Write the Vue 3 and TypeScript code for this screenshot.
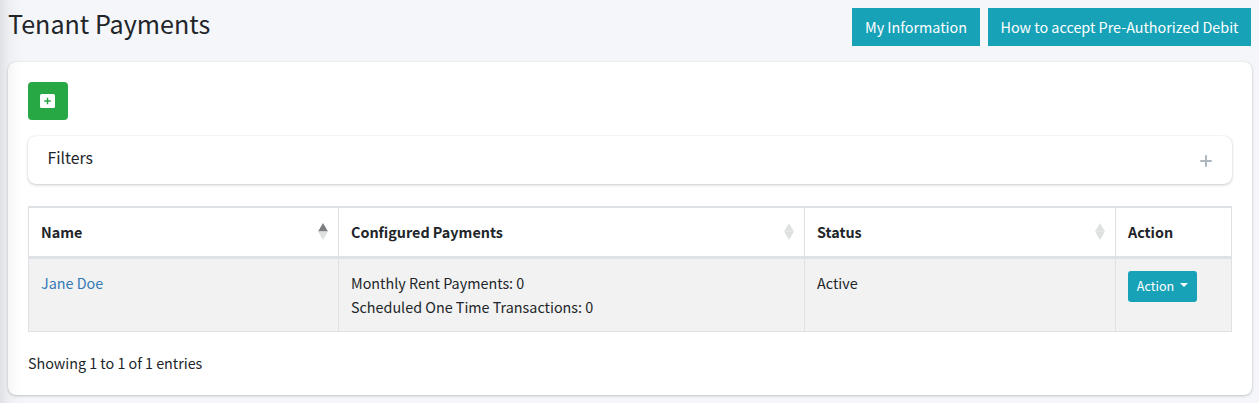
<script setup lang="ts">
interface Column {
  label: string
  sort?: 'asc' | 'none'
}

interface Tenant {
  name: string
  monthly: number
  oneTime: number
  status: string
}

const columns: Column[] = [
  { label: 'Name', sort: 'asc' },
  { label: 'Configured Payments', sort: 'none' },
  { label: 'Status', sort: 'none' },
  { label: 'Action' },
]

const tenants: Tenant[] = [{ name: 'Jane Doe', monthly: 0, oneTime: 0, status: 'Active' }]
</script>

<template>
  <div class="page">
    <header class="top">
      <h1>Tenant Payments</h1>
      <div class="links">
        <button class="info">My Information</button>
        <button class="info">How to accept Pre-Authorized Debit</button>
      </div>
    </header>

    <main class="card">
      <button class="add" aria-label="Add">
        <svg width="15" height="14" viewBox="0 0 15 14">
          <rect width="15" height="14" rx="1.6" fill="#fff" />
          <path d="M7.5 3.8v6.4M4.2 7h6.6" stroke="#28a745" stroke-width="1.5" />
        </svg>
      </button>

      <section class="filters">
        <span>Filters</span>
        <svg class="plus" width="12" height="12" viewBox="0 0 12 12">
          <path d="M6 .3v11.4M.3 6h11.4" stroke="#adb5bd" stroke-width="2" />
        </svg>
      </section>

      <table>
        <colgroup>
          <col class="c1" /><col class="c2" /><col class="c3" /><col class="c4" />
        </colgroup>
        <thead>
          <tr>
            <th v-for="c in columns" :key="c.label">
              <div class="head">
                <span>{{ c.label }}</span>
                <svg v-if="c.sort" class="sort" width="10" height="17" viewBox="0 0 10 17">
                  <path d="M5 0l5 8.6H0z" :fill="c.sort === 'asc' ? '#7b7d7e' : '#dfe1e1'" />
                  <path d="M0 8.6h10L5 17z" fill="#dfe1e1" />
                </svg>
              </div>
            </th>
          </tr>
        </thead>
        <tbody>
          <tr v-for="t in tenants" :key="t.name">
            <td><a>{{ t.name }}</a></td>
            <td>
              <div>Monthly Rent Payments: {{ t.monthly }}</div>
              <div>Scheduled One Time Transactions: {{ t.oneTime }}</div>
            </td>
            <td>{{ t.status }}</td>
            <td>
              <button class="action"><span>Action</span><i class="caret"></i></button>
            </td>
          </tr>
        </tbody>
      </table>

      <p class="summary">Showing 1 to 1 of 1 entries</p>
    </main>
  </div>
</template>

<style>
html,
body {
  background: #f4f6f9;
  overflow: hidden;
}
</style>

<style scoped>
.page {
  position: relative;
  box-sizing: border-box;
  height: 403px;
  padding: 8px 8px 0;
  background: #f4f6f9;
  color: #212529;
  font-family: 'Noto Sans CJK SC', 'Open Sans', sans-serif;
  font-size: 14.35px;
  line-height: 24px;
}

.page::before {
  content: '';
  position: absolute;
  z-index: 1;
  inset: 0 auto 0 0;
  width: 26px;
  background: linear-gradient(to right, rgba(0, 0, 0, 0.085), rgba(0, 0, 0, 0.03) 32%, rgba(0, 0, 0, 0.008) 70%, transparent);
  pointer-events: none;
}

.top {
  display: flex;
  justify-content: space-between;
  height: 54px;
}

h1 {
  margin: 0;
  font-size: 25.1px;
  font-weight: 400;
  line-height: 31px;
}

.links {
  display: flex;
  gap: 8px;
}

button {
  display: flex;
  align-items: center;
  justify-content: center;
  padding: 0;
  border: 0;
  color: #fff;
  font: inherit;
  white-space: nowrap;
}

.info {
  width: 128px;
  height: 38px;
  background: #17a2b8;
}

.info:last-child {
  width: 263px;
}

.card {
  box-sizing: border-box;
  width: 1244px;
  height: 333px;
  padding: 20px;
  border-radius: 8px;
  background: #fff;
  box-shadow: 0 0 1px rgba(0, 0, 0, 0.13), 0 1px 3px rgba(0, 0, 0, 0.2);
}

.add {
  width: 40px;
  height: 38px;
  padding-right: 1px;
  border-radius: 4px;
  background: #28a745;
}

.filters {
  display: flex;
  box-sizing: border-box;
  align-items: center;
  justify-content: space-between;
  height: 48px;
  margin: 16px 0 22px;
  padding: 0 20px 0 19.5px;
  border-radius: 8px;
  box-shadow: 0 0 1px rgba(0, 0, 0, 0.13), 0 1px 3px rgba(0, 0, 0, 0.2);
  font-size: 15.8px;
}

.filters span {
  margin-top: -4px;
}

.plus {
  margin-top: 2px;
}

table {
  width: 1204px;
  border-spacing: 0;
  border-left: 1px solid #dee2e6;
  table-layout: fixed;
}

.c1 {
  width: 310px;
}

.c2 {
  width: 466px;
}

.c3 {
  width: 311px;
}

.c4 {
  width: 116px;
}

th,
td {
  box-sizing: border-box;
  border-right: 1px solid #dee2e6;
  text-align: left;
  vertical-align: top;
}

th {
  height: 53px;
  padding: 12px 10px 12px 12px;
  border-top: 2px solid #dee2e6;
  border-bottom: 3px solid #dee2e6;
  font-weight: 700;
}

.head {
  display: flex;
  justify-content: space-between;
  height: 24px;
}

.sort {
  margin-top: 3px;
}

td {
  height: 73px;
  padding: 12px;
  border-bottom: 1px solid #dee2e6;
  background: #f2f2f2;
}

a {
  color: #337ab7;
}

.action {
  gap: 6px;
  width: 69px;
  height: 31px;
  padding-bottom: 1px;
  border-radius: 3px;
  background: #17a2b8;
  font-size: 12.55px;
}

.caret {
  margin-top: -3px;
  border: 4px solid transparent;
  border-top-color: #fff;
  border-bottom: 0;
}

.summary {
  margin: 19px 0 0;
  letter-spacing: -0.02px;
}
</style>
